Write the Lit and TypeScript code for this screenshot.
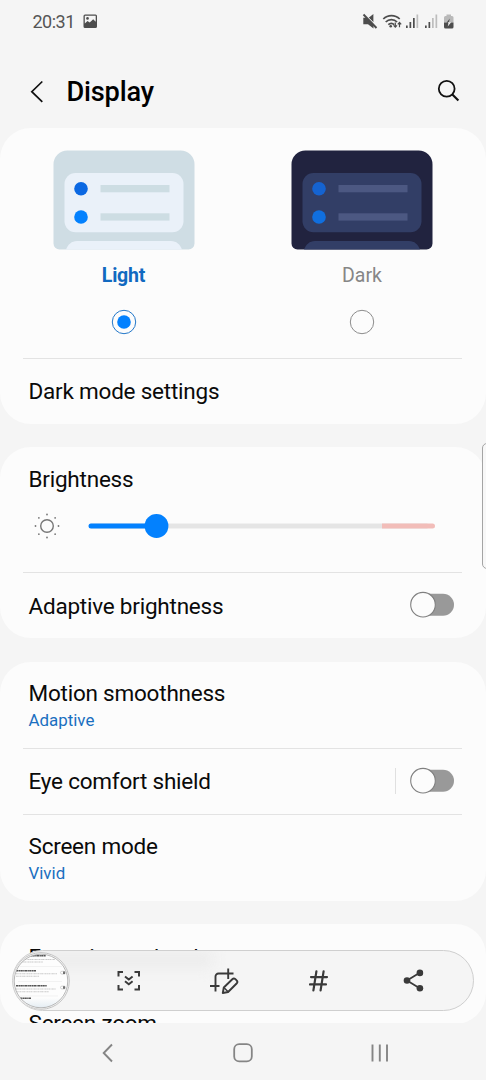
import { LitElement, html, css, svg, nothing } from "lit";
import { customElement, property } from "lit/decorators.js";

@customElement("theme-option")
class ThemeOption extends LitElement {
  @property() label = "";
  @property({ type: Boolean }) dark = false;
  @property({ type: Boolean }) selected = false;

  static styles = css`
    :host { display: flex; flex-direction: column; align-items: center; flex: 1; }
    svg { display: block; }
    .label { margin-top: 12.5px; line-height: 26px; font-size: 19.5px; color: #868686; }
    .label.on { color: #1169c0; font-weight: 700; letter-spacing: -0.2px; }
    .radio { margin-top: 20.5px; }
  `;

  render() {
    const c = this.dark
      ? { bg: "#21233f", card: "#323e66", bar: "#4c5882", a: "#1563d0", b: "#106fdf" }
      : { bg: "#cfdde4", card: "#eaf1f9", bar: "#cddde3", a: "#0b68e2", b: "#0381fe" };
    return html`
      <svg width="142" height="100" viewBox="0 0 142 100">
        <path d="M0.5 14.5a14 14 0 0 1 14-14h113a14 14 0 0 1 14 14v79a6 6 0 0 1-6 6h-129a6 6 0 0 1-6-6z" fill=${c.bg} />
        <rect x="11.5" y="23" width="119" height="59.3" rx="11" fill=${c.card} />
        <path d="M13 99.5c2-5 5.500-8.500 11-8.500h94c5.500 0 9 3.500 11 8.500z" fill=${c.card} />
        <circle cx="28" cy="38.700" r="6.800" fill=${c.a} />
        <circle cx="28" cy="67" r="6.800" fill=${c.b} />
        <rect x="47.500" y="35" width="69" height="7.300" fill=${c.bar} />
        <rect x="47.500" y="63.300" width="69" height="7.300" fill=${c.bar} />
      </svg>
      <span class="label ${this.selected ? "on" : ""}">${this.label}</span>
      <svg class="radio" width="26" height="26" viewBox="0 0 26 26">
        <circle cx="13" cy="13" r="11.700" fill="none" stroke=${this.selected ? "#2377c8" : "#8c8c8c"} stroke-width="1" />
        ${this.selected ? svg`<circle cx="13" cy="13" r="6.800" fill="#0381fe"/>` : nothing}
      </svg>
    `;
  }
}

@customElement("toggle-switch")
class ToggleSwitch extends LitElement {
  static styles = css`
    :host { display: block; padding-bottom: 1px; }
    svg { display: block; }
  `;
  render() {
    return html`<svg width="46" height="28" viewBox="0 0 46 28">
      <rect x="3" y="2.700" width="42" height="22" rx="11" fill="#999" />
      <circle cx="14" cy="13.700" r="12.300" fill="#fcfcfc" stroke="#808080" stroke-width="1.100" />
    </svg>`;
  }
}

@customElement("app-root")
class AppRoot extends LitElement {
  static styles = css`
    :host { display: block; font-family: Roboto, sans-serif; }
    * { box-sizing: border-box; }
    svg { display: block; flex: none; }
    .screen {
      position: relative; width: 486px; height: 1080px; overflow: hidden;
      display: flex; flex-direction: column; background: #f5f5f5; color: #0a0a0a;
    }
    .status {
      height: 42px; padding: 0 30px 0 32.5px; display: flex; align-items: center;
      font-size: 18px; color: #555;
    }
    .time { margin-right: 8px; letter-spacing: -0.5px; }
    .grow { flex: 1; }
    .header { height: 86px; padding: 14px 26px 0 29px; display: flex; align-items: center; }
    .title { margin: 0 0 0 19.5px; flex: 1; font-size: 27.2px; letter-spacing: -0.2px; font-weight: 500; color: #000; line-height: 32px; }
    .search { margin-right: -1px; }
    .list { height: 895px; display: flex; flex-direction: column; gap: 23.5px; overflow: hidden; }
    .card { background: #fcfcfc; border-radius: 31px; flex: none; overflow: hidden; }
    .themes { display: flex; padding: 22px 4.75px 0 4.25px; height: 229.5px; }
    .line { height: 1px; margin: 0 24px 0 23px; background: #e3e3e3; }
    .row { display: flex; align-items: center; padding: 0 31px 0 28.5px; font-size: 22.5px; letter-spacing: -0.22px; }
    .row.one { height: 65px; }
    .row.two { height: 86px; padding-top: 3px; }
    .texts { flex: 1; display: flex; flex-direction: column; }
    .name { line-height: 27px; }
    .sub { font-size: 16.9px; line-height: 26px; color: #1a6fc0; letter-spacing: 0; }
    .bright { height: 125px; padding-top: 18px; }
    .bright .row { height: 27px; }
    .slider { display: flex; align-items: center; gap: 27px; padding: 0 50px 0 33px; height: 68px; }
    .vline { width: 1px; height: 26px; margin-right: 13px; background: #e0e0e0; }
    .last { height: 99.5px; display: flex; flex-direction: column; gap: 39px; padding-top: 19px; }
    .last .row { height: 27px; flex: none; }
    .nav { height: 57px; display: flex; align-items: center; padding: 2px 97px 0 102px; justify-content: space-between; }
    .toolbar {
      position: absolute; left: 12px; top: 950px; width: 462px; height: 61px; border-radius: 31px;
      border: 1px solid #cfcfcf; background: #f5f5f5; overflow: hidden;
      display: flex; align-items: center; padding-right: 11px;
    }
    .haze {
      position: absolute; left: 26px; top: 0; width: 174px; height: 17px;
      background: #ececec; filter: blur(7px);
    }
    .thumb { margin-left: -1px; position: relative; }
    .tools { position: relative; flex: 1; display: grid; grid-template-columns: repeat(4, 95px); justify-items: center; align-items: center; padding-left: 11.5px; }
    .edge {
      position: absolute; left: 482px; top: 443px; width: 12px; height: 126px;
      border: 1px solid #a5a5a5; border-radius: 5px; background: #f8f8f8;
    }
  `;

  private signal(lit: number) {
    return [2.5, 6, 10, 13.5].map((h, i) => svg`<rect x=${0.5 + i * 3.5} y=${14.5 - h} width="1.700" height=${h} fill=${i < lit ? "#4d4d4d" : "#bdbdbd"}/>`);
  }

  render() {
    return html`
      <div class="screen">
        <div class="status">
          <span class="time">20:31</span>
          <svg width="15" height="15" viewBox="0 0 15 15">
            <path fill="#4d4d4d" fill-rule="evenodd" d="M2 .5h10.500a1.500 1.500 0 0 1 1.500 1.500v10.500a1.500 1.500 0 0 1-1.500 1.500H2A1.500 1.500 0 0 1 .5 12.500V2A1.500 1.500 0 0 1 2 .5zM1.800 1.800v7.700L4.500 7l2.200 1.600 3.500-3.300 2.500 2.400V1.800z" />
            <circle cx="4.500" cy="4.400" r="1.300" fill="#4d4d4d" />
          </svg>
          <span class="grow"></span>
          <svg width="96" height="20" viewBox="360 10 96 20">
            <path d="M363.300 16.800h4.200l6 5.800v5l-5.500-4.300h-4.700z" fill="#4d4d4d" />
            <path d="M368.700 16.800l4.700-3.800v8.300z" fill="#4d4d4d" />
            <path d="M364.800 13l12.500 13" stroke="#f5f5f5" stroke-width="1" />
            <path d="M363.500 13.500l13 13.500" stroke="#4d4d4d" stroke-width="1.900" />
            <g fill="none" stroke="#4d4d4d" stroke-width="1.700">
              <path d="M383.300 18a11.500 11.500 0 0 1 16.400 0" />
              <path d="M385.700 21a8 8 0 0 1 11.400 0" />
              <path d="M388.300 23.600a4.600 4.600 0 0 1 6 0" />
            </g>
            <circle cx="390.700" cy="25.200" r="1.300" fill="#4d4d4d" />
            <path d="M395.300 21.500v4.500m-1.700-1.700l1.700 1.900 1.700-1.900M399.500 26.200v-4.500m-1.700 1.700l1.700-1.900 1.700 1.900" fill="none" stroke="#4d4d4d" stroke-width="1.200" />
            <g transform="translate(405.500 12.500)">${this.signal(3)}</g>
            <g transform="translate(424.500 12.500)">${this.signal(2)}</g>
            <path d="M444 16.500a1.500 1.500 0 0 1 1.500-1.500h1v-1.500h4.500v1.500h1a1.500 1.500 0 0 1 1.500 1.500v5h-9.500z" fill="#b9b9b9" />
            <path d="M444 21.500h9.500v4.500a1.500 1.500 0 0 1-1.500 1.500h-6.500a1.500 1.500 0 0 1-1.500-1.500z" fill="#4d4d4d" />
            <path d="M449.800 17.500l-3.300 4.200h2.300z" fill="#4d4d4d" />
            <path d="M448 21.300h3.200l-3.500 4.200.7-2.800z" fill="#f5f5f5" />
          </svg>
        </div>

        <header class="header">
          <svg width="18" height="24" viewBox="0 0 18 24"><path d="M13.300 1.500L2.800 11.700l10.500 10.200" fill="none" stroke="#111" stroke-width="1.700" /></svg>
          <h1 class="title">Display</h1>
          <svg class="search" width="24" height="24" viewBox="0 0 24 24"><circle cx="9.700" cy="8.800" r="7.900" fill="none" stroke="#111" stroke-width="1.800" /><path d="M15.400 14.600l6 6" stroke="#111" stroke-width="2.100" /></svg>
        </header>

        <main class="list">
          <section class="card">
            <div class="themes">
              <theme-option label="Light" selected></theme-option>
              <theme-option label="Dark" dark></theme-option>
            </div>
            <div class="line"></div>
            <div class="row one">Dark mode settings</div>
          </section>

          <section class="card">
            <div class="bright">
              <div class="row">Brightness</div>
              <div class="slider">
                <svg width="28" height="28" viewBox="0 0 28 28">
                  <circle cx="14" cy="14" r="6.300" fill="none" stroke="#777" stroke-width="1.400" />
                  ${[0, 45, 90, 135, 180, 225, 270, 315].map((a) => svg`<circle cx="14" cy="2.500" r="0.900" fill="#777" transform="rotate(${a} 14 14)"/>`)}
                </svg>
                <svg width="348" height="26" viewBox="0 0 348 26">
                  <rect x="1" y="10.500" width="340" height="5" rx="2.500" fill="#e5e5e5" />
                  <path d="M294 10.500h50.500a2.500 2.500 0 0 1 0 5H294z" fill="#f2bdb9" />
                  <rect x="0.500" y="10.500" width="70" height="5" rx="2.500" fill="#0381fe" />
                  <circle cx="68.500" cy="13" r="11.900" fill="#0381fe" />
                </svg>
              </div>
            </div>
            <div class="line"></div>
            <div class="row one"><span class="grow">Adaptive brightness</span><toggle-switch></toggle-switch></div>
          </section>

          <section class="card">
            <div class="row two"><div class="texts"><span class="name">Motion smoothness</span><span class="sub">Adaptive</span></div></div>
            <div class="line"></div>
            <div class="row one"><span class="grow">Eye comfort shield</span><span class="vline"></span><toggle-switch></toggle-switch></div>
            <div class="line"></div>
            <div class="row two"><div class="texts"><span class="name">Screen mode</span><span class="sub">Vivid</span></div></div>
          </section>

          <section class="card last">
            <div class="row">Font size and style</div>
            <div class="row">Screen zoom</div>
          </section>
        </main>

        <nav class="nav">
          <svg width="12" height="20" viewBox="0 0 12 20"><path d="M10 1.500L1.700 10l8.300 8.500" fill="none" stroke="#858585" stroke-width="1.900" /></svg>
          <svg width="20" height="20" viewBox="0 0 20 20"><rect x="1.200" y="1.200" width="17.600" height="17.200" rx="5" fill="none" stroke="#858585" stroke-width="1.800" /></svg>
          <svg width="18" height="20" viewBox="0 0 18 20"><path d="M1.500 1.500v17M8.800 1.500v17M16 1.500v17" stroke="#858585" stroke-width="1.900" /></svg>
        </nav>

        <div class="toolbar">
          <div class="haze"></div>
          <svg class="thumb" width="58" height="58" viewBox="0 0 58 58">
            <defs>
              <clipPath id="disc"><circle cx="29" cy="29" r="26.800" /></clipPath>
              <linearGradient id="fade" x1="0" y1="0" x2="0" y2="1"><stop offset="0" stop-color="#fdfdfd" /><stop offset="1" stop-color="#dfe9f1" /></linearGradient>
            </defs>
            <circle cx="29" cy="29" r="28.300" fill="#fbfbfb" stroke="#c2c2c2" stroke-width="1" />
            <g clip-path="url(#disc)">
              <rect width="58" height="58" fill="#fdfdfd" />
              <rect y="46" width="58" height="12" fill="url(#fade)" />
              <g fill="none" stroke="#555" stroke-width="1.400" stroke-dasharray="2.400 .4 1.300 .3">
                <path d="M16 3.800h18M4 18.800h20M4 33.800h31M8 46.300h11" />
              </g>
              <g fill="none" stroke="#cacaca" stroke-width="1.100" stroke-dasharray="1.800 .5 .9 .4">
                <path d="M5 7.500h38M5 10h26M4 21.800h41M4 24.300h23M4 37h40M4 39.700h33" />
              </g>
              <path d="M6 14.500h44M6 29.500h44M6 44h40" stroke="#ececec" stroke-width=".7" />
              <g fill="#fff" stroke="#aaa" stroke-width=".5"><rect x="48.500" y="19.300" width="5" height="2.800" rx="1.400" /><rect x="48.500" y="34.100" width="5" height="2.800" rx="1.400" /></g>
              <path d="M52 19.500v2.500M52 34.300v2.500" stroke="#444" stroke-width="1.500" />
            </g>
            <circle cx="29" cy="29" r="26.800" fill="none" stroke="#a5a5a5" stroke-width=".8" />
          </svg>
          <div class="tools">
            <svg width="26" height="22" viewBox="0 0 26 22" fill="none" stroke="#3a3a3a">
              <path d="M2.500 6.500V2h4.500M18.500 2h4.500v4.500M23 15v4.500h-4.500M7 19.500H2.500V15" stroke-width="2" />
              <path d="M9 6.500l3.800 3 3.800-3M9 11.300l3.800 3 3.800-3" stroke-width="2" />
            </svg>
            <svg width="30" height="30" viewBox="0 0 30 30" fill="none" stroke="#3a3a3a" stroke-width="1.900">
              <path d="M1 20h9.500M6.500 25.500V10.500a3 3 0 0 1 3-3h15M19.200 2.500v10.500" />
              <path d="M13.800 27l1-5.500 8.500-8.300a2.200 2.200 0 0 1 3.100 0l1.200 1.200a2.200 2.200 0 0 1 0 3.100L19.100 26z" stroke-linejoin="round" />
              <path d="M15.100 21.800l4 4" stroke-width="1.500" />
            </svg>
            <svg width="20" height="22" viewBox="0 0 20 22" fill="none" stroke="#3a3a3a" stroke-width="2.200" stroke-linecap="round">
              <path d="M7.400 1.300L4.400 20.300M14.600 1.300l-3 19M2 7.100h16M1 14.400h16" />
            </svg>
            <svg width="22" height="24" viewBox="0 0 22 24" fill="#3a3a3a">
              <path d="M16.700 3.800L4 11.500l12.700 7.700" fill="none" stroke="#3a3a3a" stroke-width="1.800" />
              <circle cx="16.900" cy="3.900" r="3.300" /><circle cx="4" cy="11.500" r="3.300" /><circle cx="16.900" cy="19.200" r="3.300" />
            </svg>
          </div>
        </div>
        <div class="edge"></div>
      </div>
    `;
  }
}
